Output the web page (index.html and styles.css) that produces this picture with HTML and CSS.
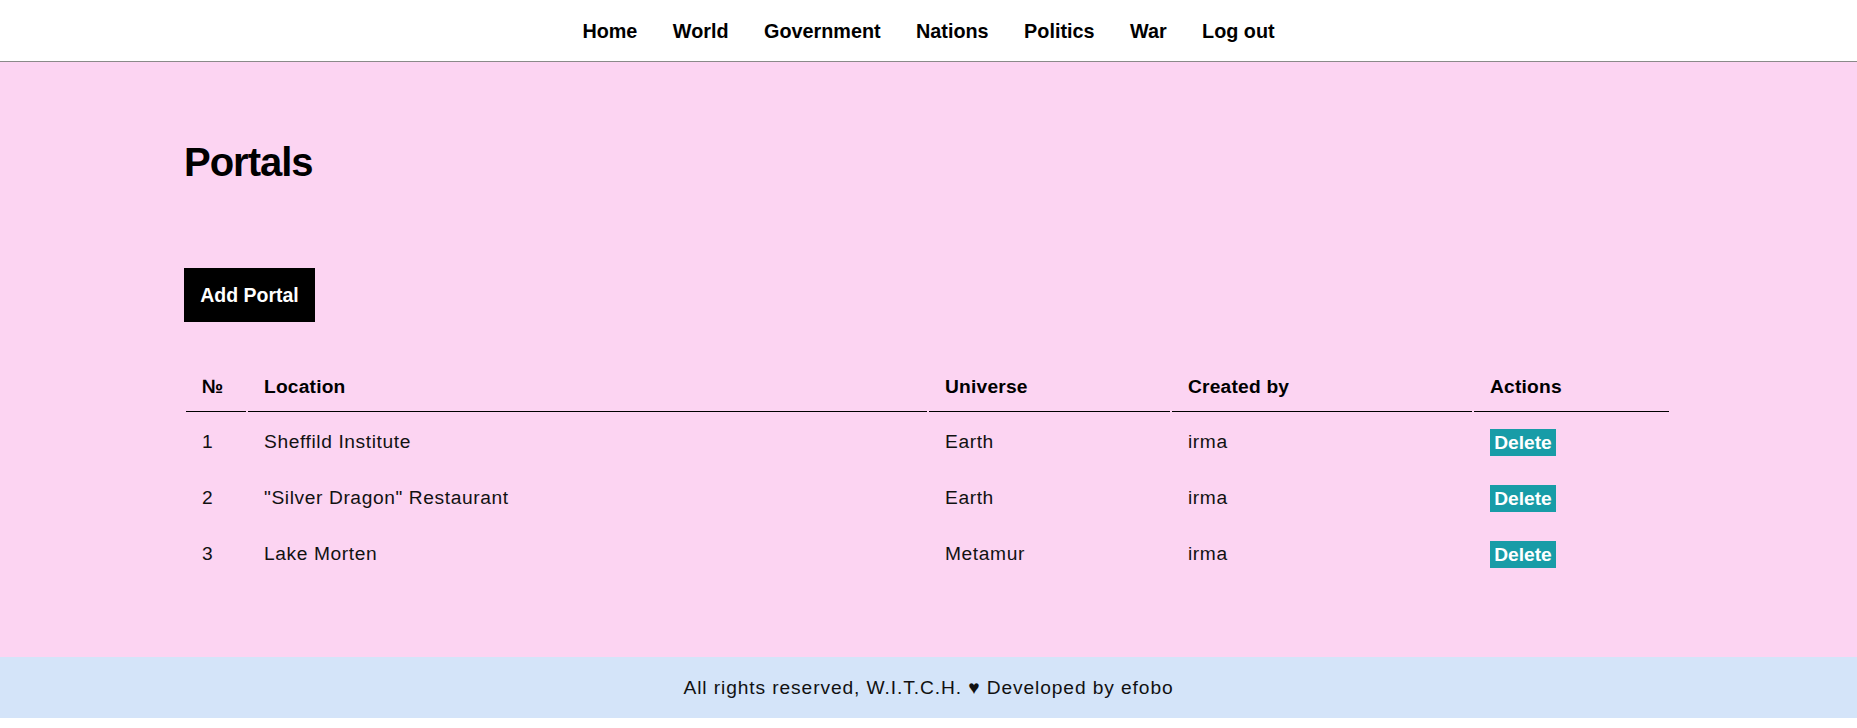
FILE: index.html
```html
<!DOCTYPE html>
<html lang="en">
<head>
<meta charset="utf-8">
<title>Portals</title>
<link rel="stylesheet" href="styles.css">
</head>
<body>
<header class="topbar">
  <nav class="nav">
    <a class="nav-link" href="#">Home</a>
    <a class="nav-link" href="#">World</a>
    <a class="nav-link" href="#">Government</a>
    <a class="nav-link" href="#">Nations</a>
    <a class="nav-link" href="#">Politics</a>
    <a class="nav-link" href="#">War</a>
    <a class="nav-link" href="#">Log out</a>
  </nav>
</header>
<main class="main">
  <div class="container">
    <h1 class="title">Portals</h1>
    <button class="add-btn" type="button">Add Portal</button>
    <table class="portal-table">
      <thead>
        <tr>
          <th class="col-num">№</th>
          <th class="col-loc">Location</th>
          <th class="col-uni">Universe</th>
          <th class="col-by">Created by</th>
          <th class="col-act">Actions</th>
        </tr>
      </thead>
      <tbody>
        <tr>
          <td>1</td>
          <td>Sheffild Institute</td>
          <td>Earth</td>
          <td>irma</td>
          <td><button class="del-btn" type="button">Delete</button></td>
        </tr>
        <tr>
          <td>2</td>
          <td>"Silver Dragon" Restaurant</td>
          <td>Earth</td>
          <td>irma</td>
          <td><button class="del-btn" type="button">Delete</button></td>
        </tr>
        <tr>
          <td>3</td>
          <td>Lake Morten</td>
          <td>Metamur</td>
          <td>irma</td>
          <td><button class="del-btn" type="button">Delete</button></td>
        </tr>
      </tbody>
    </table>
  </div>
</main>
<footer class="footer">All rights reserved, W.I.T.C.H. ♥ Developed by efobo</footer>
</body>
</html>
```
FILE: styles.css
```css
html, body {
  margin: 0;
  padding: 0;
}
body {
  font-family: "Liberation Sans", Arial, sans-serif;
  font-size: 19.2px;
  color: #111;
  background: #fff;
}
.topbar {
  height: 60px;
  padding-top: 1px;
  border-bottom: 1px solid #8a8a8a;
  display: flex;
  align-items: center;
  justify-content: center;
}
.nav {
  display: flex;
  gap: 35.5px;
}
.nav-link {
  font-size: 19.8px;
  font-weight: 700;
  color: #000;
  text-decoration: none;
  line-height: 23px;
}
.main {
  background: #fcd4f2;
  padding: 77px 0 75px;
}
.container {
  width: 1487px;
  padding-right: 2px;
  margin: 0 auto;
}
.title {
  margin: 0 0 83px;
  font-size: 40px;
  line-height: 46px;
  font-weight: 700;
  color: #000;
  letter-spacing: -1px;
}
.add-btn {
  display: block;
  background: #000;
  color: #fff;
  border: none;
  font-family: inherit;
  font-size: 19.5px;
  font-weight: 700;
  line-height: 22px;
  padding: 16px 15px;
  width: 131px;
  height: 54px;
  margin: 0 0 40px;
}
.portal-table {
  width: 100%;
  border-spacing: 2px;
}
.portal-table th {
  text-align: left;
  font-weight: 700;
  color: #000;
  padding: 12px 16px 13px;
  line-height: 22px;
  border-bottom: 1px solid #000;
  letter-spacing: 0.2px;
}
.col-num { width: 28px; }
.col-uni { width: 209px; }
.col-by { width: 268px; }
.col-act { width: 163px; }
.portal-table td {
  padding: 14px 16px 12px;
  line-height: 22px;
  height: 28px;
  vertical-align: middle;
  letter-spacing: 0.6px;
}
.del-btn {
  display: inline-block;
  vertical-align: middle;
  background: #189ca7;
  color: #fff;
  border: none;
  font-family: inherit;
  font-size: 19.2px;
  font-weight: 700;
  line-height: 27px;
  height: 27px;
  padding: 0 4px;
  width: 66px;
  letter-spacing: 0;
}
.footer {
  background: #d4e4f9;
  height: 61px;
  display: flex;
  align-items: center;
  justify-content: center;
  color: #111;
  letter-spacing: 0.9px;
  margin-bottom: 11px;
}
```
